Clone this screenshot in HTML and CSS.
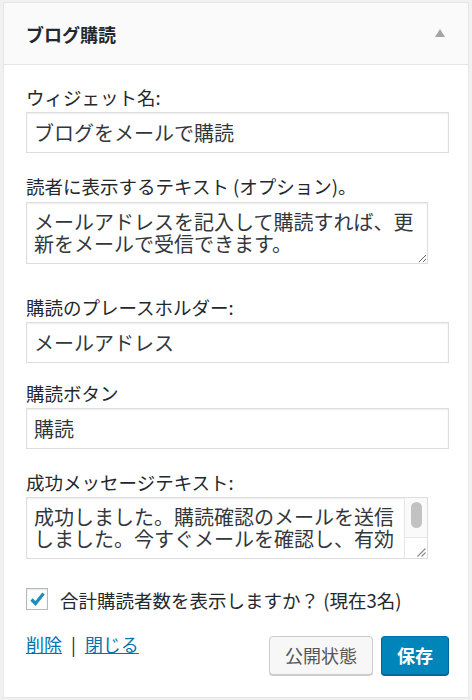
FILE: index.html
```html
<!DOCTYPE html>
<html lang="ja">
<head>
<meta charset="utf-8">
<title>ブログ購読</title>
<link rel="stylesheet" href="styles.css">
</head>
<body>
<div class="widget">
  <div class="widget-top">
    <h3 class="widget-title">ブログ購読</h3>
    <svg class="toggle" width="10" height="8" viewBox="0 0 10 8"><polygon points="5,0 10,8 0,8" fill="#a0a5aa"/></svg>
  </div>
  <div class="widget-inside">
    <div class="field f1">
      <label class="lbl">ウィジェット名:</label>
      <input class="txt" type="text" value="ブログをメールで購読">
    </div>
    <div class="field f2">
      <label class="lbl">読者に表示するテキスト (オプション)。</label>
      <textarea class="area">メールアドレスを記入して購読すれば、更新をメールで受信できます。</textarea>
    </div>
    <div class="field f3">
      <label class="lbl">購読のプレースホルダー:</label>
      <input class="txt" type="text" value="メールアドレス">
    </div>
    <div class="field f4">
      <label class="lbl">購読ボタン</label>
      <input class="txt" type="text" value="購読">
    </div>
    <div class="field f5">
      <label class="lbl">成功メッセージテキスト:</label>
      <div class="area-box">
        <textarea class="area-inner">成功しました。購読確認のメールを送信しました。今すぐメールを確認し、有効化リンクをクリックして購読を開始してください。</textarea>
        <div class="vscroll">
          <div class="track"><div class="thumb"></div></div>
          <div class="corner"><svg width="10" height="10" viewBox="0 0 10 10"><path d="M9.5 1.5 L1.5 9.5 M9.5 5.5 L5.5 9.5" stroke="#8c8c8c" stroke-width="1.1" fill="none"/></svg></div>
        </div>
      </div>
    </div>
    <div class="check-row">
      <span class="cb"><svg width="20" height="20" viewBox="0 0 20 20"><path d="M4.5 10.5 L8.5 14.5 L16.5 4.5" fill="none" stroke="#1e8cbe" stroke-width="3.2"/></svg></span>
      <span class="cb-text">合計購読者数を表示しますか？ (現在3名)</span>
    </div>
    <div class="actions">
      <div class="links"><a href="#">削除</a><span class="sep">|</span><a href="#">閉じる</a></div>
      <div class="buttons">
        <button class="btn">公開状態</button>
        <button class="btn btn-primary">保存</button>
      </div>
    </div>
  </div>
</div>
</body>
</html>
```
FILE: styles.css
```css
* { box-sizing: border-box; }
html, body { margin: 0; padding: 0; }
body {
  background: #f1f1f1;
  font-family: "Noto Sans CJK JP", "Noto Sans", sans-serif;
  color: #23282d;
  padding: 2px 3px 0 3px;
}
.widget {
  background: #fff;
  border: 1px solid #e5e5e5;
  height: 696px;
}
.widget-top {
  height: 62px;
  background: #fafafa;
  border-bottom: 1px solid #e5e5e5;
  display: flex;
  align-items: center;
  justify-content: space-between;
  padding: 0 23px 0 22px;
}
.widget-title {
  margin: 0;
  font-size: 18px;
  font-weight: 700;
  line-height: 24px;
  color: #23282d;
}
.toggle { display: block; margin-top: -2px; }
.widget-inside {
  padding: 20px 19px 0 22px;
}
.field { display: flex; flex-direction: column; align-items: flex-start; }
.f1 { margin-bottom: 21px; }
.f2 { margin-bottom: 31px; }
.f3 { margin-bottom: 18px; }
.f4 { margin-bottom: 21px; }
.f5 { margin-bottom: 29px; }
.lbl {
  display: block;
  font-size: 18.5px;
  line-height: 24px;
  margin-bottom: 3px;
  color: #23282d;
}
.txt {
  width: 423px;
  height: 41px;
  border: 1px solid #ddd;
  box-shadow: inset 0 1px 2px rgba(0,0,0,.07);
  padding: 0 7px;
  font-family: "Noto Sans CJK JP", sans-serif;
  font-size: 20px;
  color: #32373c;
  background: #fff;
  margin: 0;
  outline: none;
}
.area {
  width: 402px;
  height: 62px;
  border: 1px solid #ddd;
  box-shadow: inset 0 1px 2px rgba(0,0,0,.07);
  padding: 8px 7px 0 7px;
  font-family: "Noto Sans CJK JP", sans-serif;
  font-size: 20px;
  line-height: 22px;
  color: #32373c;
  background: #fff;
  margin: 1px 0 0 0;
  display: block;
  overflow: hidden;
  outline: none;
}
.area-box {
  width: 402px;
  height: 62px;
  border: 1px solid #ddd;
  box-shadow: inset 0 1px 2px rgba(0,0,0,.07);
  display: flex;
  align-items: flex-start;
  background: #fff;
}
.area-inner {
  flex: 1;
  min-width: 0;
  height: 52px;
  border: 0;
  padding: 8px 0 0 7px;
  font-family: "Noto Sans CJK JP", sans-serif;
  font-size: 20px;
  line-height: 22px;
  color: #32373c;
  background: transparent;
  margin: 0;
  overflow: hidden;
  resize: none;
  outline: none;
}
.vscroll {
  width: 23px;
  height: 100%;
  border-left: 1px solid #e6e6e6;
  display: flex;
  flex-direction: column;
  background: #fafafa;
}
.track { flex: 1; padding: 4px 0 0 6px; }
.thumb {
  width: 11px;
  height: 26px;
  border-radius: 6px;
  background: #c2c2c2;
}
.corner {
  height: 21px;
  border-top: 1px solid #e6e6e6;
  background: #fff;
  display: flex;
  align-items: flex-end;
  justify-content: flex-end;
  padding: 0 1px 1px 0;
}
.corner svg { display: block; }
.check-row {
  display: flex;
  align-items: center;
  height: 22px;
}
.cb {
  width: 22px;
  height: 22px;
  border: 1px solid #b4b9be;
  box-shadow: inset 0 1px 2px rgba(0,0,0,.1);
  background: #fff;
  display: flex;
  align-items: center;
  justify-content: center;
}
.cb svg { display: block; }
.cb-text {
  margin-left: 12px;
  font-size: 18.5px;
  line-height: 24px;
  color: #23282d;
  margin-top: 2px;
}
.actions {
  display: flex;
  justify-content: space-between;
  align-items: flex-start;
  margin-top: 22px;
}
.links {
  font-size: 18px;
  line-height: 24px;
  color: #23282d;
  display: flex;
}
.links a { color: #0073aa; text-decoration: underline; }
.sep { margin: 0 9px; }
.buttons { display: flex; gap: 8px; margin-top: 4px; }
.btn {
  height: 39px;
  padding: 0 15px;
  font-family: "Noto Sans CJK JP", sans-serif;
  font-size: 18px;
  line-height: 37px;
  border-radius: 4px;
  border: 1px solid #ccc;
  background: #f7f7f7;
  color: #555;
  box-shadow: 0 1px 0 #ccc;
  margin: 0;
}
.btn-primary {
  background: #0085ba;
  border-color: #0073aa #006799 #006799;
  color: #fff;
  font-weight: 700;
  box-shadow: 0 1px 0 #006799;
}
```
